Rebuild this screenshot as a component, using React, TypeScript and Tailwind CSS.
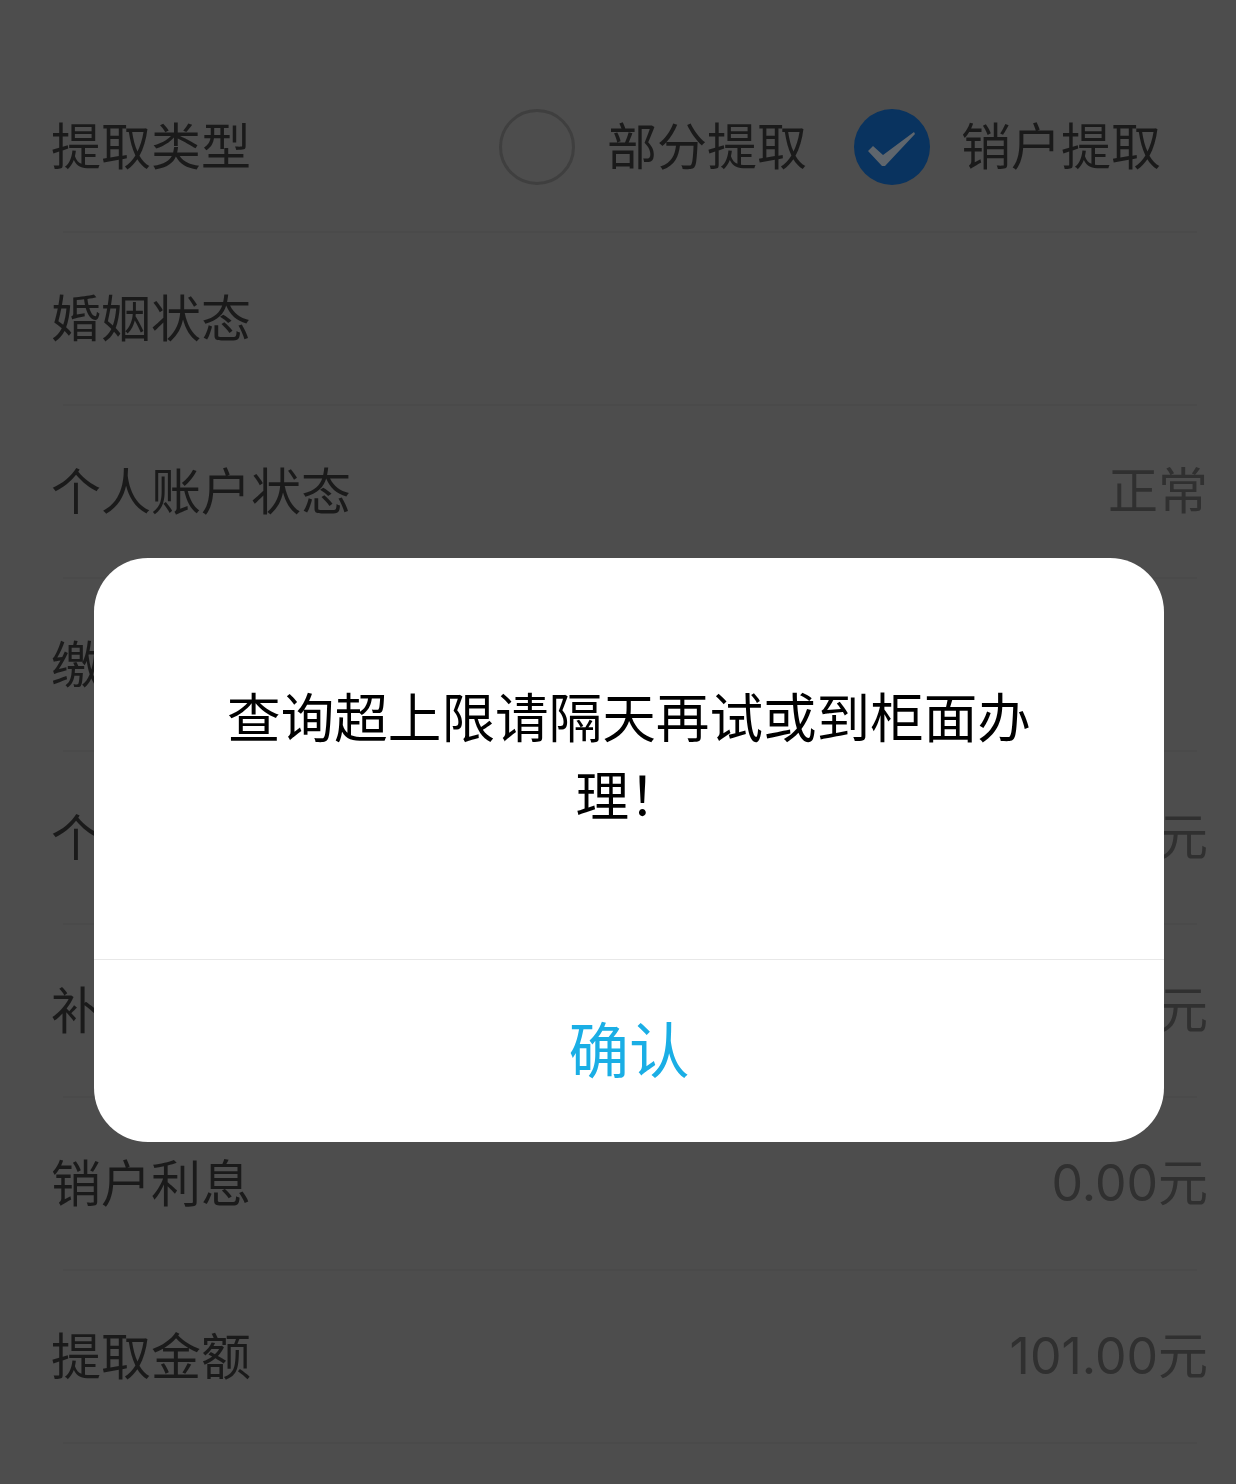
const rows = [
  { label: "婚姻状态", value: "" },
  { label: "个人账户状态", value: "正常" },
  { label: "缴存状态", value: "" },
  { label: "个人账户余额", value: "101.00元" },
  { label: "补充账户余额", value: "0.00元" },
  { label: "销户利息", value: "0.00元" },
  { label: "提取金额", value: "101.00元" },
];

export default function App() {
  return (
    <div className="relative h-[1484px] w-[1236px] overflow-hidden bg-[#4d4d4d] font-['Noto_Sans_CJK_SC',sans-serif] text-[50px] leading-none text-[#1a1a1a]">
      <div className="pt-[61px]">
        {/* extraction type row */}
        <div className="ml-[63px] mr-[39px] h-[172px] border-b-2 border-[#4a4a4a]">
          <div className="-ml-[12px] mr-[36px] flex h-full items-center">
            <span className="flex-1 pb-[6px]">提取类型</span>
            <span className="mt-[2px] h-[76px] w-[76px] rounded-full border-[3px] border-[#3f3f3f]" />
            <span className="ml-[32px] pb-[6px]">部分提取</span>
            <span className="ml-[47px] mt-[2px] h-[76px] w-[76px] rounded-full bg-[#09335f]">
              <svg width="76" height="76" viewBox="0 0 76 76">
                <path d="M14 42 L19 37 L29 46 L60 23 L61 25 L31 57 L28 57 Z" fill="#5f666d" />
              </svg>
            </span>
            <span className="ml-[31px] pb-[6px]">销户提取</span>
          </div>
        </div>

        {rows.map((row) => (
          <div key={row.label} className="ml-[63px] mr-[39px] h-[173px] border-b-2 border-[#4a4a4a]">
            <div className="-ml-[12px] -mr-[11px] flex h-full items-center justify-between pb-[7px]">
              <span>{row.label}</span>
              <span className="pt-[6px] font-['Inter','Noto_Sans_CJK_SC',sans-serif] text-[#303030]">{row.value}</span>
            </div>
          </div>
        ))}
      </div>

      {/* alert dialog */}
      <div className="absolute left-[94px] top-[558px] flex h-[584px] w-[1070px] flex-col rounded-[54px] bg-white">
        <div className="flex h-[402px] flex-col items-center border-b border-[#e8e8e8] pt-[118px] text-[53.6px] leading-[78px] text-black">
          <span>查询超上限请隔天再试或到柜面办</span>
          <span>理！</span>
        </div>
        <div className="flex flex-1 items-center justify-center pb-[8px] text-[60.5px] text-[#1aaee5]">确认</div>
      </div>
    </div>
  );
}
